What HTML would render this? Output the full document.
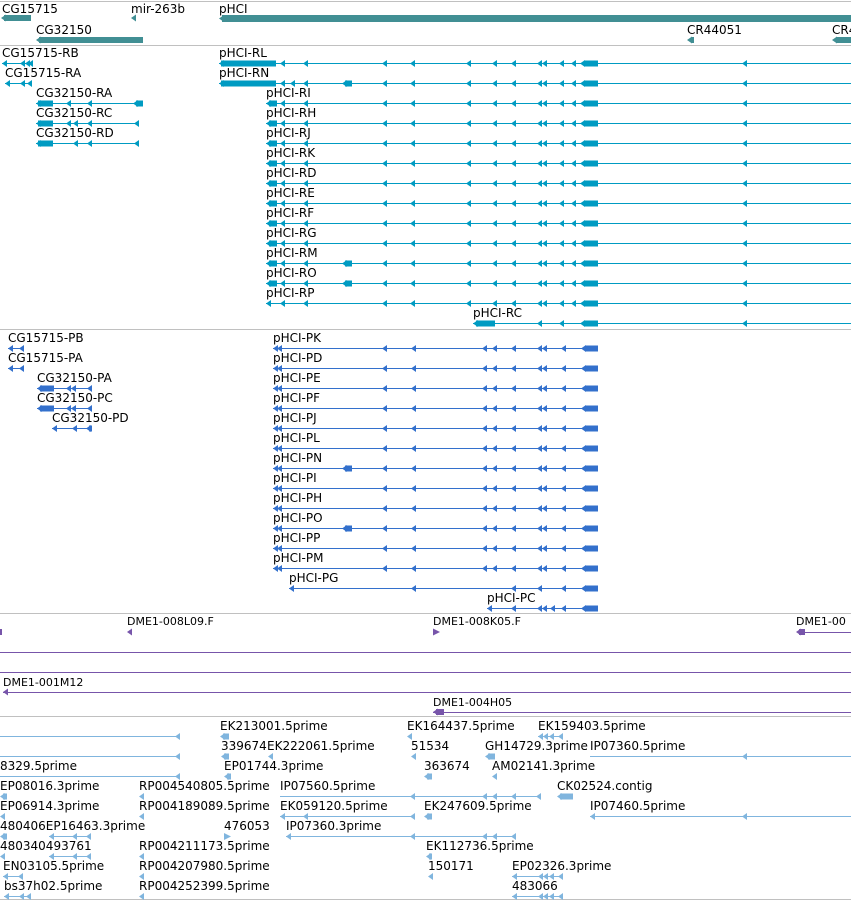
<!DOCTYPE html>
<html><head><meta charset="utf-8"><style>
html,body{margin:0;padding:0;background:#fff;width:851px;height:901px;overflow:hidden}
svg{display:block}
text{font-family:"DejaVu Sans","Liberation Sans",sans-serif;font-size:12px;fill:#000}
</style></head><body>
<svg width="851" height="901" viewBox="0 0 851 901" xmlns="http://www.w3.org/2000/svg">
<defs>
<path id="a" d="M0 0L5 -3.5L5 3.5Z"/>
<path id="r" d="M7 0L0 -3.5L0 3.5Z"/>
<g id="rpat">
<use href="#a" x="280" y="0"/><use href="#a" x="303" y="0"/><use href="#a" x="382" y="0"/><use href="#a" x="410" y="0"/><use href="#a" x="466" y="0"/><use href="#a" x="492" y="0"/><use href="#a" x="511" y="0"/><use href="#a" x="537" y="0"/><use href="#a" x="542" y="0"/><use href="#a" x="559" y="0"/><use href="#a" x="571" y="0"/><use href="#a" x="580" y="0"/><rect x="585" y="-3" width="13" height="6"/><use href="#a" x="742" y="0"/>
</g>
<g id="ppat">
<use href="#a" x="273" y="0"/><use href="#a" x="277" y="0"/><use href="#a" x="382" y="0"/><use href="#a" x="411" y="0"/><use href="#a" x="482" y="0"/><use href="#a" x="492" y="0"/><use href="#a" x="511" y="0"/><use href="#a" x="537" y="0"/><use href="#a" x="542" y="0"/><use href="#a" x="561" y="0"/><use href="#a" x="581" y="0"/><rect x="585" y="-3" width="13" height="6"/>
</g>
</defs>
<!-- separators -->
<g stroke="#c0c0c0" stroke-width="1">
<line x1="0" y1="1.5" x2="851" y2="1.5"/><line x1="0" y1="45.5" x2="851" y2="45.5"/>
<line x1="0" y1="329.5" x2="851" y2="329.5"/><line x1="0" y1="613.5" x2="851" y2="613.5"/>
<line x1="0" y1="716.5" x2="851" y2="716.5"/><line x1="0" y1="899.5" x2="851" y2="899.5"/>
</g>

<!-- gene track -->
<g fill="#418f94">
<text x="2" y="13">CG15715</text><rect x="4" y="15" width="27" height="6"/><use href="#a" x="1" y="18"/>
<text x="36" y="34">CG32150</text><rect x="39" y="37" width="104" height="6"/><use href="#a" x="36" y="40"/>
<text x="131" y="13">mir-263b</text><use href="#a" x="131" y="18"/>
<text x="219" y="13">pHCI</text><rect x="222" y="15" width="629" height="7"/><use href="#a" x="219" y="18.5"/>
<text x="687" y="34">CR44051</text><use href="#a" x="687" y="40"/><rect x="691" y="37" width="3" height="6"/>
<text x="832" y="34">CR4</text><rect x="836" y="37" width="15" height="6"/><use href="#a" x="832" y="40"/>
</g>

<!-- R transcripts -->
<g fill="#009bc2" stroke="#009bc2">
<g stroke="none">
<text x="2" y="57">CG15715-RB</text>
<text x="5" y="77">CG15715-RA</text>
<text x="36" y="97">CG32150-RA</text>
<text x="36" y="117">CG32150-RC</text>
<text x="36" y="137">CG32150-RD</text>
<text x="219" y="57">pHCI-RL</text>
<text x="219" y="77">pHCI-RN</text>
<text x="266" y="97">pHCI-RI</text>
<text x="266" y="117">pHCI-RH</text>
<text x="266" y="137">pHCI-RJ</text>
<text x="266" y="157">pHCI-RK</text>
<text x="266" y="177">pHCI-RD</text>
<text x="266" y="197">pHCI-RE</text>
<text x="266" y="217">pHCI-RF</text>
<text x="266" y="237">pHCI-RG</text>
<text x="266" y="257">pHCI-RM</text>
<text x="266" y="277">pHCI-RO</text>
<text x="266" y="297">pHCI-RP</text>
<text x="473" y="317">pHCI-RC</text>
</g>
<g stroke-width="1">
<line x1="2" y1="63.5" x2="31" y2="63.5"/><line x1="5" y1="83.5" x2="31" y2="83.5"/>
<line x1="36" y1="103.5" x2="143" y2="103.5"/><line x1="36" y1="123.5" x2="139" y2="123.5"/><line x1="36" y1="143.5" x2="139" y2="143.5"/>
<line x1="219" y1="63.5" x2="851" y2="63.5"/><line x1="219" y1="83.5" x2="851" y2="83.5"/>
<line x1="266" y1="103.5" x2="851" y2="103.5"/><line x1="266" y1="123.5" x2="851" y2="123.5"/>
<line x1="266" y1="143.5" x2="851" y2="143.5"/><line x1="266" y1="163.5" x2="851" y2="163.5"/>
<line x1="266" y1="183.5" x2="851" y2="183.5"/><line x1="266" y1="203.5" x2="851" y2="203.5"/>
<line x1="266" y1="223.5" x2="851" y2="223.5"/><line x1="266" y1="243.5" x2="851" y2="243.5"/>
<line x1="266" y1="263.5" x2="851" y2="263.5"/><line x1="266" y1="283.5" x2="851" y2="283.5"/>
<line x1="266" y1="303.5" x2="851" y2="303.5"/><line x1="473" y1="323.5" x2="851" y2="323.5"/>
</g>
<g stroke="none">
<use href="#a" x="2" y="63.5"/><use href="#a" x="20" y="63.5"/><use href="#a" x="25" y="63.5"/><use href="#a" x="28" y="63.5"/>
<use href="#a" x="5" y="83.5"/><use href="#a" x="20" y="83.5"/><use href="#a" x="27" y="83.5"/>
<rect x="38" y="100.5" width="15" height="6"/><use href="#a" x="36" y="103.5"/><use href="#a" x="66" y="103.5"/><use href="#a" x="87" y="103.5"/><rect x="136" y="100.5" width="7" height="6"/><use href="#a" x="133" y="103.5"/>
<rect x="38" y="120.5" width="15" height="6"/><use href="#a" x="36" y="123.5"/><use href="#a" x="66" y="123.5"/><use href="#a" x="73" y="123.5"/><use href="#a" x="87" y="123.5"/><use href="#a" x="134" y="123.5"/>
<rect x="38" y="140.5" width="15" height="6"/><use href="#a" x="36" y="143.5"/><use href="#a" x="73" y="143.5"/><use href="#a" x="87" y="143.5"/><use href="#a" x="134" y="143.5"/>
<rect x="221" y="60.5" width="55" height="6"/><use href="#a" x="219" y="63.5"/>
<rect x="221" y="80.5" width="55" height="6"/><use href="#a" x="219" y="83.5"/><use href="#a" x="290" y="83.5"/><rect x="345" y="80.5" width="7" height="6"/><use href="#a" x="342" y="83.5"/>
<rect x="476" y="320.5" width="19" height="6"/><use href="#a" x="473" y="323.5"/>
</g>
</g>
<g fill="#009bc2">
<use href="#rpat" x="0" y="63.5"/><use href="#rpat" x="0" y="83.5"/><use href="#rpat" x="0" y="103.5"/>
<use href="#rpat" x="0" y="123.5"/><use href="#rpat" x="0" y="143.5"/><use href="#rpat" x="0" y="163.5"/>
<use href="#rpat" x="0" y="183.5"/><use href="#rpat" x="0" y="203.5"/><use href="#rpat" x="0" y="223.5"/>
<use href="#rpat" x="0" y="243.5"/><use href="#rpat" x="0" y="263.5"/><use href="#rpat" x="0" y="283.5"/>
<use href="#rpat" x="0" y="303.5"/>
<rect x="345" y="260.5" width="7" height="6"/><use href="#a" x="342" y="263.5"/>
<rect x="345" y="280.5" width="7" height="6"/><use href="#a" x="342" y="283.5"/>
<use href="#a" x="266" y="103.5"/><rect x="269" y="100.5" width="8" height="6"/><use href="#a" x="266" y="123.5"/><rect x="269" y="120.5" width="8" height="6"/>
<use href="#a" x="266" y="143.5"/><rect x="269" y="140.5" width="8" height="6"/><use href="#a" x="266" y="163.5"/><rect x="269" y="160.5" width="8" height="6"/>
<use href="#a" x="266" y="183.5"/><rect x="269" y="180.5" width="8" height="6"/><use href="#a" x="266" y="203.5"/><rect x="269" y="200.5" width="8" height="6"/>
<use href="#a" x="266" y="223.5"/><rect x="269" y="220.5" width="8" height="6"/><use href="#a" x="266" y="243.5"/><rect x="269" y="240.5" width="8" height="6"/>
<use href="#a" x="266" y="263.5"/><rect x="269" y="260.5" width="8" height="6"/><use href="#a" x="266" y="283.5"/><rect x="269" y="280.5" width="8" height="6"/>
<use href="#a" x="266" y="303.5"/>
<use href="#a" x="580" y="323.5"/><rect x="585" y="320.5" width="13" height="6"/><use href="#a" x="742" y="323.5"/><use href="#a" x="537" y="323.5"/><use href="#a" x="559" y="323.5"/>
</g>

<!-- P transcripts -->
<g fill="#3370cc" stroke="#3370cc">
<g stroke="none">
<text x="8" y="342">CG15715-PB</text><text x="8" y="362">CG15715-PA</text>
<text x="37" y="382">CG32150-PA</text><text x="37" y="402">CG32150-PC</text><text x="52" y="422">CG32150-PD</text>
<text x="273" y="342">pHCI-PK</text><text x="273" y="362">pHCI-PD</text><text x="273" y="382">pHCI-PE</text>
<text x="273" y="402">pHCI-PF</text><text x="273" y="422">pHCI-PJ</text><text x="273" y="442">pHCI-PL</text>
<text x="273" y="462">pHCI-PN</text><text x="273" y="482">pHCI-PI</text><text x="273" y="502">pHCI-PH</text>
<text x="273" y="522">pHCI-PO</text><text x="273" y="542">pHCI-PP</text><text x="273" y="562">pHCI-PM</text>
<text x="289" y="582">pHCI-PG</text><text x="487" y="602">pHCI-PC</text>
</g>
<g stroke-width="1">
<line x1="8" y1="348.5" x2="24" y2="348.5"/><line x1="8" y1="368.5" x2="24" y2="368.5"/>
<line x1="37" y1="388.5" x2="92" y2="388.5"/><line x1="37" y1="408.5" x2="92" y2="408.5"/><line x1="52" y1="428.5" x2="92" y2="428.5"/>
<line x1="273" y1="348.5" x2="598" y2="348.5"/><line x1="273" y1="368.5" x2="598" y2="368.5"/><line x1="273" y1="388.5" x2="598" y2="388.5"/>
<line x1="273" y1="408.5" x2="598" y2="408.5"/><line x1="273" y1="428.5" x2="598" y2="428.5"/><line x1="273" y1="448.5" x2="598" y2="448.5"/>
<line x1="273" y1="468.5" x2="598" y2="468.5"/><line x1="273" y1="488.5" x2="598" y2="488.5"/><line x1="273" y1="508.5" x2="598" y2="508.5"/>
<line x1="273" y1="528.5" x2="598" y2="528.5"/><line x1="273" y1="548.5" x2="598" y2="548.5"/><line x1="273" y1="568.5" x2="598" y2="568.5"/>
<line x1="289" y1="588.5" x2="598" y2="588.5"/><line x1="487" y1="608.5" x2="598" y2="608.5"/>
</g>
<g stroke="none">
<use href="#a" x="8" y="348.5"/><use href="#a" x="19" y="348.5"/><use href="#a" x="8" y="368.5"/><use href="#a" x="19" y="368.5"/>
<rect x="40" y="385.5" width="14" height="6"/><use href="#a" x="37" y="388.5"/><use href="#a" x="66" y="388.5"/><use href="#a" x="71" y="388.5"/><use href="#a" x="87" y="388.5"/>
<rect x="40" y="405.5" width="14" height="6"/><use href="#a" x="37" y="408.5"/><use href="#a" x="66" y="408.5"/><use href="#a" x="71" y="408.5"/><use href="#a" x="87" y="408.5"/>
<use href="#a" x="52" y="428.5"/><use href="#a" x="72" y="428.5"/><use href="#a" x="86" y="428.5"/><rect x="89" y="425.5" width="3" height="6"/>
<use href="#a" x="289" y="588.5"/><use href="#a" x="411" y="588.5"/><use href="#a" x="511" y="588.5"/><use href="#a" x="537" y="588.5"/><use href="#a" x="561" y="588.5"/><use href="#a" x="581" y="588.5"/><rect x="585" y="585.5" width="13" height="6"/>
<use href="#a" x="487" y="608.5"/><use href="#a" x="511" y="608.5"/><use href="#a" x="537" y="608.5"/><use href="#a" x="542" y="608.5"/><use href="#a" x="550" y="608.5"/><use href="#a" x="561" y="608.5"/><use href="#a" x="581" y="608.5"/><rect x="585" y="605.5" width="13" height="6"/>
<rect x="345" y="465.5" width="7" height="6"/><use href="#a" x="342" y="468.5"/>
<rect x="345" y="525.5" width="7" height="6"/><use href="#a" x="342" y="528.5"/>
</g>
</g>
<g fill="#3370cc">
<use href="#ppat" y="348.5"/><use href="#ppat" y="368.5"/><use href="#ppat" y="388.5"/><use href="#ppat" y="408.5"/>
<use href="#ppat" y="428.5"/><use href="#ppat" y="448.5"/><use href="#ppat" y="468.5"/><use href="#ppat" y="488.5"/>
<use href="#ppat" y="508.5"/><use href="#ppat" y="528.5"/><use href="#ppat" y="548.5"/><use href="#ppat" y="568.5"/>
</g>

<!-- purple -->
<g fill="#7755aa" stroke="#7755aa">
<g stroke="none">
<text x="127" y="625" style="font-size:11px">DME1-008L09.F</text>
<text x="433" y="625" style="font-size:11px">DME1-008K05.F</text>
<text x="796" y="625" style="font-size:11px">DME1-00</text>
<text x="3" y="686" style="font-size:11px">DME1-001M12</text>
<text x="433" y="706" style="font-size:11px">DME1-004H05</text>
<rect x="0" y="629" width="2" height="6"/><use href="#a" x="127" y="632"/><use href="#r" x="433" y="632"/>
<use href="#a" x="796" y="632"/><rect x="799" y="629" width="6" height="6"/>
<use href="#a" x="3" y="692"/><use href="#a" x="433" y="712"/><rect x="436" y="709" width="8" height="6"/>
</g>
<g stroke-width="1">
<line x1="800" y1="632.5" x2="851" y2="632.5"/>
<line x1="0" y1="652.5" x2="851" y2="652.5"/><line x1="0" y1="672.5" x2="851" y2="672.5"/>
<line x1="3" y1="692.5" x2="851" y2="692.5"/><line x1="433" y1="712.5" x2="851" y2="712.5"/>
</g>
</g>

<!-- ESTs -->
<g fill="#80b5de" stroke="#80b5de">
<g stroke="none">
<text x="220" y="730">EK213001.5prime</text><text x="407" y="730">EK164437.5prime</text><text x="538" y="730">EK159403.5prime</text>
<text x="221" y="750">339674</text><text x="267" y="750">EK222061.5prime</text><text x="411" y="750">51534</text><text x="485" y="750">GH14729.3prime</text><text x="590" y="750">IP07360.5prime</text>
<text x="0" y="770">8329.5prime</text><text x="224" y="770">EP01744.3prime</text><text x="424" y="770">363674</text><text x="492" y="770">AM02141.3prime</text>
<text x="0" y="790">EP08016.3prime</text><text x="139" y="790">RP004540805.5prime</text><text x="280" y="790">IP07560.5prime</text><text x="557" y="790">CK02524.contig</text>
<text x="0" y="810">EP06914.3prime</text><text x="139" y="810">RP004189089.5prime</text><text x="280" y="810">EK059120.5prime</text><text x="424" y="810">EK247609.5prime</text><text x="590" y="810">IP07460.5prime</text>
<text x="0" y="830">480406EP16463.3prime</text><text x="224" y="830">476053</text><text x="286" y="830">IP07360.3prime</text>
<text x="0" y="850">480340493761</text><text x="139" y="850">RP004211173.5prime</text><text x="426" y="850">EK112736.5prime</text>
<text x="3" y="870">EN03105.5prime</text><text x="139" y="870">RP004207980.5prime</text><text x="428" y="870">150171</text><text x="512" y="870">EP02326.3prime</text>
<text x="4" y="890">bs37h02.5prime</text><text x="139" y="890">RP004252399.5prime</text><text x="512" y="890">483066</text>
</g>
<g stroke-width="1">
<line x1="0" y1="736.5" x2="180" y2="736.5"/><line x1="0" y1="756.5" x2="180" y2="756.5"/><line x1="0" y1="776.5" x2="180" y2="776.5"/>
<line x1="538" y1="736.5" x2="563" y2="736.5"/>
<line x1="590" y1="756.5" x2="851" y2="756.5"/><line x1="590" y1="816.5" x2="851" y2="816.5"/>
<line x1="280" y1="796.5" x2="540" y2="796.5"/>
<line x1="280" y1="816.5" x2="415" y2="816.5"/>
<line x1="49" y1="836.5" x2="90" y2="836.5"/><line x1="49" y1="856.5" x2="90" y2="856.5"/>
<line x1="286" y1="836.5" x2="516" y2="836.5"/>
<line x1="3" y1="876.5" x2="23" y2="876.5"/><line x1="4" y1="896.5" x2="31" y2="896.5"/>
<line x1="512" y1="876.5" x2="563" y2="876.5"/><line x1="512" y1="896.5" x2="563" y2="896.5"/>
</g>
<g stroke="none">
<use href="#a" x="175" y="736.5"/><use href="#a" x="175" y="756.5"/><use href="#a" x="175" y="776.5"/>
<use href="#a" x="220" y="736.5"/><rect x="223" y="733.5" width="6" height="6"/>
<use href="#a" x="407" y="736.5"/><use href="#a" x="538" y="736.5"/><use href="#a" x="543" y="736.5"/><use href="#a" x="549" y="736.5"/><use href="#a" x="558" y="736.5"/>
<use href="#a" x="221" y="756.5"/><rect x="224" y="753.5" width="5" height="6"/><use href="#a" x="268" y="756.5"/><use href="#a" x="411" y="756.5"/>
<use href="#a" x="485" y="756.5"/><rect x="488" y="753.5" width="7" height="6"/><use href="#a" x="742" y="756.5"/>
<use href="#a" x="224" y="776.5"/><rect x="227" y="773.5" width="4" height="6"/><use href="#a" x="424" y="776.5"/><rect x="427" y="773.5" width="5" height="6"/><use href="#a" x="492" y="776.5"/>
<use href="#a" x="0" y="796.5"/><rect x="3" y="793.5" width="4" height="6"/><use href="#a" x="139" y="796.5"/>
<use href="#a" x="410" y="796.5"/><use href="#a" x="482" y="796.5"/><use href="#a" x="492" y="796.5"/><use href="#a" x="511" y="796.5"/><use href="#a" x="536" y="796.5"/>
<use href="#a" x="557" y="796.5"/><rect x="560" y="793.5" width="13" height="6"/>
<use href="#a" x="0" y="816.5"/><use href="#a" x="139" y="816.5"/><use href="#a" x="280" y="816.5"/><use href="#a" x="303" y="816.5"/><use href="#a" x="410" y="816.5"/>
<use href="#a" x="424" y="816.5"/><rect x="427" y="813.5" width="5" height="6"/><use href="#a" x="590" y="816.5"/><use href="#a" x="742" y="816.5"/>
<use href="#a" x="0" y="836.5"/><rect x="3" y="833.5" width="4" height="6"/><use href="#a" x="49" y="836.5"/><use href="#a" x="72" y="836.5"/><use href="#a" x="86" y="836.5"/>
<use href="#r" x="224" y="836.5"/><use href="#a" x="286" y="836.5"/><use href="#a" x="410" y="836.5"/><use href="#a" x="482" y="836.5"/><use href="#a" x="492" y="836.5"/><use href="#a" x="511" y="836.5"/>
<use href="#a" x="0" y="856.5"/><use href="#a" x="49" y="856.5"/><use href="#a" x="72" y="856.5"/><use href="#a" x="86" y="856.5"/><use href="#a" x="139" y="856.5"/>
<use href="#a" x="426" y="856.5"/><rect x="429" y="853.5" width="3" height="6"/>
<use href="#a" x="3" y="876.5"/><use href="#a" x="18" y="876.5"/><use href="#a" x="139" y="876.5"/><use href="#a" x="428" y="876.5"/>
<use href="#a" x="512" y="876.5"/><use href="#a" x="538" y="876.5"/><use href="#a" x="543" y="876.5"/><use href="#a" x="549" y="876.5"/><use href="#a" x="558" y="876.5"/>
<use href="#a" x="4" y="896.5"/><use href="#a" x="19" y="896.5"/><use href="#a" x="26" y="896.5"/><use href="#a" x="139" y="896.5"/>
<use href="#a" x="512" y="896.5"/><use href="#a" x="538" y="896.5"/><use href="#a" x="543" y="896.5"/><use href="#a" x="549" y="896.5"/><use href="#a" x="558" y="896.5"/>
</g>
</g>
</svg>
</body></html>
